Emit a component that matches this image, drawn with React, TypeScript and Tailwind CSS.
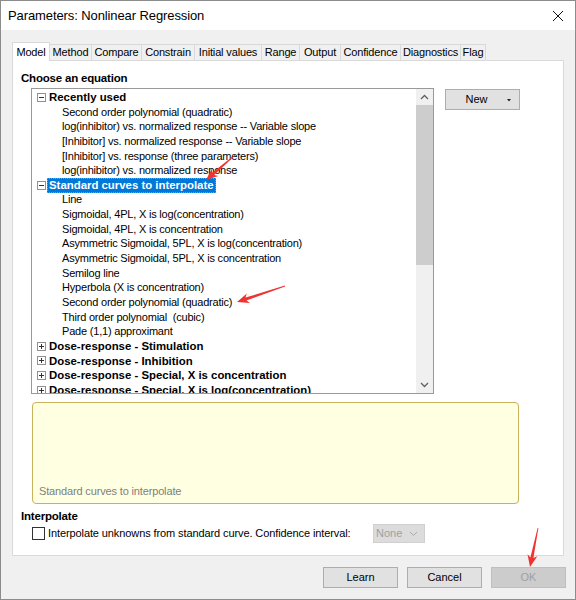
import React from "react";

type Row =
  | { kind: "group"; label: string; open: boolean; selected?: boolean }
  | { kind: "item"; label: string };

const rows: Row[] = [
  { kind: "group", label: "Recently used", open: true },
  { kind: "item", label: "Second order polynomial (quadratic)" },
  { kind: "item", label: "log(inhibitor) vs. normalized response -- Variable slope" },
  { kind: "item", label: "[Inhibitor] vs. normalized response -- Variable slope" },
  { kind: "item", label: "[Inhibitor] vs. response (three parameters)" },
  { kind: "item", label: "log(inhibitor) vs. normalized response" },
  { kind: "group", label: "Standard curves to interpolate", open: true, selected: true },
  { kind: "item", label: "Line" },
  { kind: "item", label: "Sigmoidal, 4PL, X is log(concentration)" },
  { kind: "item", label: "Sigmoidal, 4PL, X is concentration" },
  { kind: "item", label: "Asymmetric Sigmoidal, 5PL, X is log(concentration)" },
  { kind: "item", label: "Asymmetric Sigmoidal, 5PL, X is concentration" },
  { kind: "item", label: "Semilog line" },
  { kind: "item", label: "Hyperbola (X is concentration)" },
  { kind: "item", label: "Second order polynomial (quadratic)" },
  { kind: "item", label: "Third order polynomial\u00a0 (cubic)" },
  { kind: "item", label: "Pade (1,1) approximant" },
  { kind: "group", label: "Dose-response - Stimulation", open: false },
  { kind: "group", label: "Dose-response - Inhibition", open: false },
  { kind: "group", label: "Dose-response - Special, X is concentration", open: false },
  { kind: "group", label: "Dose-response - Special, X is log(concentration)", open: false },
];

const tabs: { label: string; w: string }[] = [
  { label: "Model", w: "w-[38px]" },
  { label: "Method", w: "w-[42px]" },
  { label: "Compare", w: "w-[50px]" },
  { label: "Constrain", w: "w-[53px]" },
  { label: "Initial values", w: "w-[67px]" },
  { label: "Range", w: "w-[38px]" },
  { label: "Output", w: "w-[41px]" },
  { label: "Confidence", w: "w-[60px]" },
  { label: "Diagnostics", w: "w-[60px]" },
  { label: "Flag", w: "w-[25px]" },
];

function Expander({ open }: { open: boolean }) {
  return (
    <span className="relative w-[9px] h-[9px] border border-[#919191] bg-white shrink-0">
      <span className="absolute left-[1px] top-[3px] w-[5px] h-px bg-[#333]" />
      {!open && <span className="absolute left-[3px] top-[1px] w-px h-[5px] bg-[#333]" />}
    </span>
  );
}

function Chevron({ up }: { up?: boolean }) {
  return (
    <svg width="9" height="6" viewBox="0 0 9 6">
      <polyline
        points={up ? "1,5 4.5,1.5 8,5" : "1,1 4.5,4.5 8,1"}
        fill="none"
        stroke="#606060"
        strokeWidth="1.3"
      />
    </svg>
  );
}

// Tapered red annotation arrow from tail to tip
function arrowPoints(x1: number, y1: number, x2: number, y2: number) {
  const dx = x2 - x1;
  const dy = y2 - y1;
  const len = Math.hypot(dx, dy);
  const ux = dx / len;
  const uy = dy / len;
  const nx = -uy;
  const ny = ux;
  const head = 12;
  const headW = 10;
  const shaftW = 3;
  const tailW = 0.8;
  const bx = x2 - ux * head;
  const by = y2 - uy * head;
  const nb = x2 - ux * (head - 2.5);
  const nby = y2 - uy * (head - 2.5);
  const pts: [number, number][] = [
    [x1 + (nx * tailW) / 2, y1 + (ny * tailW) / 2],
    [nb + (nx * shaftW) / 2, nby + (ny * shaftW) / 2],
    [bx + (nx * headW) / 2, by + (ny * headW) / 2],
    [x2, y2],
    [bx - (nx * headW) / 2, by - (ny * headW) / 2],
    [nb - (nx * shaftW) / 2, nby - (ny * shaftW) / 2],
    [x1 - (nx * tailW) / 2, y1 - (ny * tailW) / 2],
  ];
  return pts.map((p) => `${p[0].toFixed(1)},${p[1].toFixed(1)}`).join(" ");
}

function Button({ label, disabled }: { label: string; disabled?: boolean }) {
  return (
    <div
      className={
        disabled
          ? "w-[75px] h-[21px] flex items-center justify-center border border-[#bfbfbf] bg-[#cccccc] text-[11px] text-[#a0a0a0]"
          : "w-[75px] h-[21px] flex items-center justify-center border border-[#adadad] bg-[#e1e1e1] text-[11px] text-black"
      }
    >
      {label}
    </div>
  );
}

export default function App() {
  return (
    <div className="relative w-[576px] h-[600px] flex flex-col border border-[#8c8c8c] bg-[#f0f0f0] overflow-hidden font-['Liberation_Sans',Arial,sans-serif] text-black">
      {/* title bar */}
      <div className="h-[29px] shrink-0 bg-white flex items-center justify-between pl-[7px] pr-[11px]">
        <span className="text-[13px] tracking-[-0.1px]">Parameters: Nonlinear Regression</span>
        <svg width="12" height="12" viewBox="0 0 12 12">
          <line x1="1" y1="1" x2="11" y2="11" stroke="#111" strokeWidth="1" />
          <line x1="11" y1="1" x2="1" y2="11" stroke="#111" strokeWidth="1" />
        </svg>
      </div>

      {/* tab control */}
      <div className="mx-[11px] mt-[12px] flex flex-col">
        <div className="flex items-end h-[18px] text-[11px] tracking-[-0.15px]">
          {tabs.map((t, i) =>
            i === 0 ? (
              <div
                key={t.label}
                className={`${t.w} h-[19px] -mb-px relative z-10 bg-white border border-b-0 border-[#d9d9d9] flex items-center justify-center`}
              >
                {t.label}
              </div>
            ) : (
              <div
                key={t.label}
                className={`${t.w} h-[16px] bg-[#f0f0f0] border-t border-r border-[#d9d9d9] flex items-center justify-center`}
              >
                {t.label}
              </div>
            )
          )}
        </div>

        <div className="h-[496px] bg-white border border-[#d9d9d9] px-[8px] pt-[10px] flex flex-col">
          <div className="h-[14px] leading-[14px] text-[11.5px] font-bold tracking-[-0.2px]">Choose an equation</div>

          <div className="flex mt-[3px]">
            {/* equation tree */}
            <div className="ml-[10px] w-[403px] h-[306px] border border-[#999] bg-white flex">
              <div className="w-[384px] overflow-hidden pt-[1px]">
                {rows.map((r, i) =>
                  r.kind === "group" ? (
                    <div key={i} className="h-[14.65px] flex items-center pl-[5px] whitespace-nowrap">
                      <Expander open={r.open} />
                      <span
                        className={
                          r.selected
                            ? "ml-[1px] px-[1px] h-[15px] leading-[13px] bg-[#0078d7] text-white border border-dotted border-[#e0883a] text-[11.4px] font-bold"
                            : "ml-[3px] text-[11.4px] font-bold leading-[14px]"
                        }
                      >
                        {r.label}
                      </span>
                    </div>
                  ) : (
                    <div
                      key={i}
                      className="h-[14.65px] leading-[14.65px] pl-[30px] whitespace-nowrap text-[11px] tracking-[-0.2px]"
                    >
                      {r.label}
                    </div>
                  )
                )}
              </div>
              <div className="w-[17px] bg-[#f0f0f0] flex flex-col">
                <div className="h-[16px] flex items-center justify-center">
                  <Chevron up />
                </div>
                <div className="h-[160px] bg-[#cdcdcd]" />
                <div className="flex-1" />
                <div className="h-[17px] flex items-center justify-center">
                  <Chevron />
                </div>
              </div>
            </div>

            {/* new equation button */}
            <div className="ml-[11px] mt-[1px] w-[75px] h-[21px] border border-[#adadad] bg-[#e1e1e1] flex items-center relative">
              <span className="flex-1 text-center text-[11px] pr-[12px]">New</span>
              <svg className="absolute right-[8px] top-[9px]" width="4" height="3" viewBox="0 0 4 3">
                <polygon points="0,0 4,0 2,2.5" fill="#222" />
              </svg>
            </div>
          </div>

          {/* description box */}
          <div className="mt-[8px] ml-[11px] w-[487px] h-[102px] bg-[#ffffe1] border border-[#c8b25c] rounded-[4px] flex flex-col justify-end pl-[6px] pb-[5px]">
            <span className="text-[11px] leading-[14px] tracking-[-0.15px] text-[#808080]">Standard curves to interpolate</span>
          </div>

          <div className="mt-[5px] h-[14px] leading-[14px] text-[11.5px] font-bold tracking-[-0.2px]">Interpolate</div>

          <div className="mt-[1px] h-[19px] flex items-center">
            <div className="ml-[11px] w-[13px] h-[13px] border border-[#333] bg-white shrink-0" />
            <span className="ml-[3px] w-[325px] text-[11px] tracking-[-0.1px] whitespace-nowrap">
              Interpolate unknowns from standard curve. Confidence interval:
            </span>
            <div className="w-[52px] h-[19px] bg-[#dcdcdc] border border-[#d0d0d0] flex items-center justify-between pl-[2px] pr-[6px]">
              <span className="text-[11px] text-[#a0a0a0]">None</span>
              <svg width="9" height="6" viewBox="0 0 9 6">
                <polyline points="1,1 4.5,4.5 8,1" fill="none" stroke="#a8a8a8" strokeWidth="1" />
              </svg>
            </div>
          </div>
        </div>
      </div>

      {/* dialog buttons */}
      <div className="flex justify-end gap-[9px] mt-[11px] mr-[9px]">
        <Button label="Learn" />
        <Button label="Cancel" />
        <Button label="OK" disabled />
      </div>

      {/* red annotation arrows */}
      <svg className="absolute left-0 top-0 pointer-events-none" width="576" height="600" viewBox="0 0 576 600">
        <polygon points={arrowPoints(234, 154, 205, 179)} fill="#ef3333" />
        <polygon points={arrowPoints(284, 285, 236, 301)} fill="#ef3333" />
        <polygon points={arrowPoints(537, 527, 529, 566)} fill="#ef3333" />
      </svg>
    </div>
  );
}
